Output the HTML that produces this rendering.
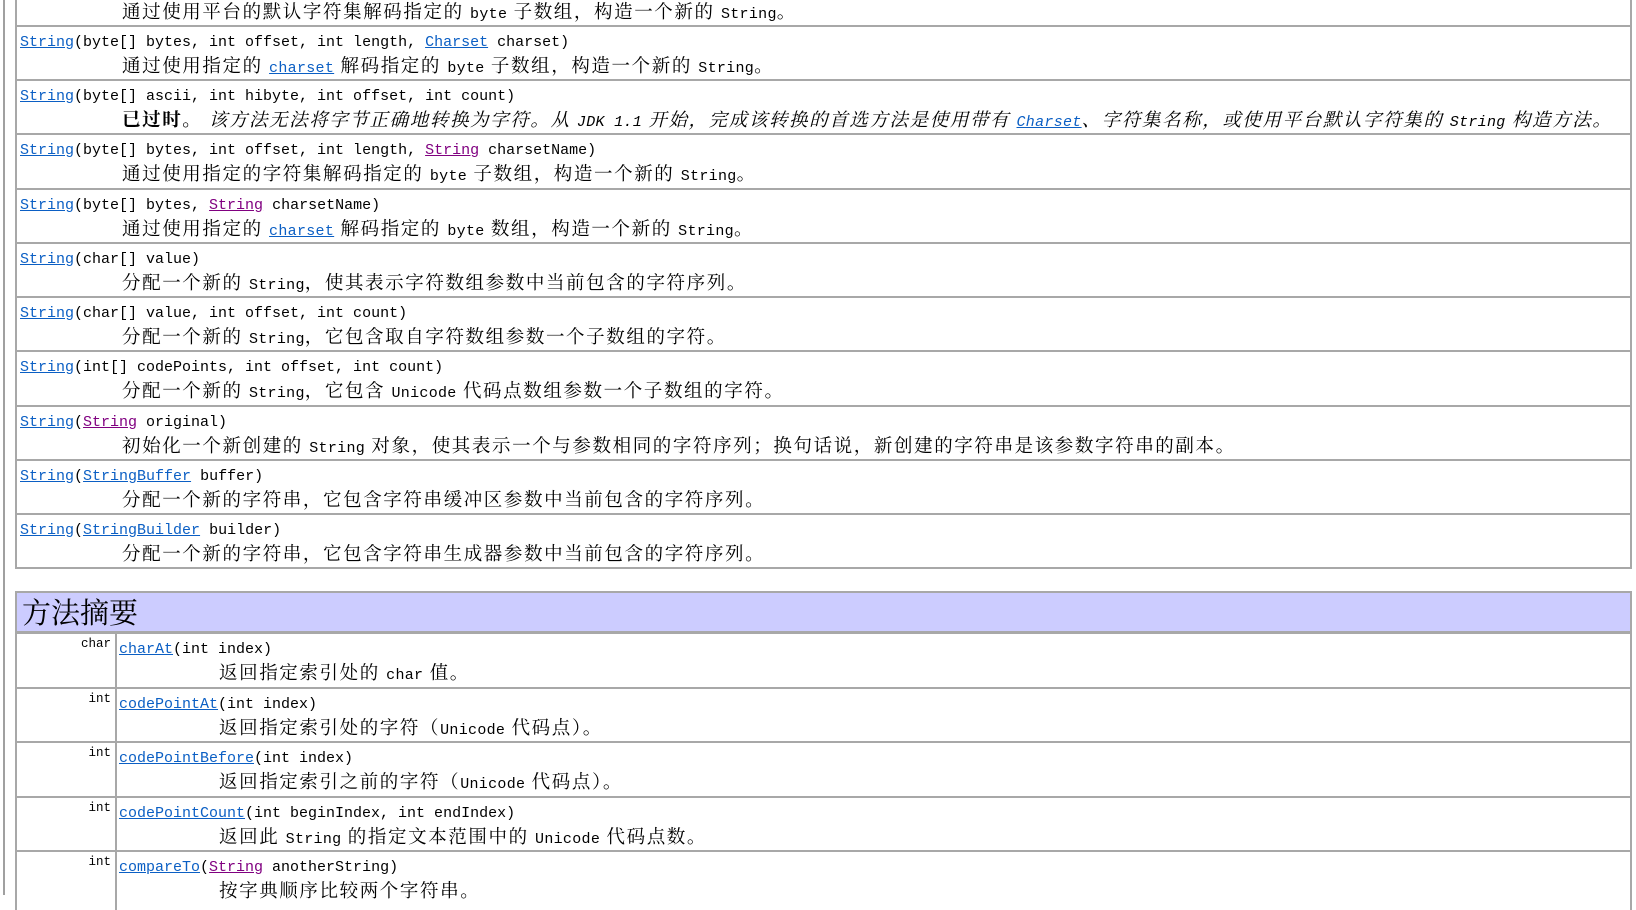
<!DOCTYPE html>
<html><head><meta charset="utf-8">
<style>
body{margin:0;width:1636px;height:895px;overflow:hidden;background:#fff;position:relative;font-family:"Liberation Mono","Noto Sans CJK SC",monospace;font-size:15px;color:#000}
.frame{position:absolute;left:3px;top:0;width:2px;height:895px;background:#a0a0a0}
.row{position:absolute;left:15px;width:1617px;border-top:2px solid #a8a8a8;border-left:2px solid #a8a8a8;border-right:2px solid #a8a8a8;box-sizing:border-box}
.sig{position:absolute;left:3px;top:6px;white-space:nowrap;line-height:20px}
.desc{position:absolute;left:105px;top:27px;white-space:nowrap;font-family:"Noto Serif CJK SC","Noto Sans CJK SC",serif;font-size:18.5px;letter-spacing:1.6px;line-height:22px}
.desc code,.desc .m{font-family:"Liberation Mono",monospace;font-size:15px;letter-spacing:0.3px}
a{color:#0b5fc4;text-decoration:underline}
a.b{color:#0b5fc4}
a.v{color:#800080}
.hdr{position:absolute;left:15px;top:591px;width:1617px;height:42px;background:#ccccff;border:2px solid #a8a8a8;box-sizing:border-box;font-family:"Noto Serif CJK SC",serif;font-size:29px;line-height:38px;padding-left:5px}
.mrow{position:absolute;left:15px;width:1617px;border-top:2px solid #a8a8a8;border-left:2px solid #a8a8a8;border-right:2px solid #a8a8a8;box-sizing:border-box;height:56px}
.ty{position:absolute;left:0;width:94px;top:3px;text-align:right;font-size:12.5px}
.col{position:absolute;left:98px;top:0;bottom:0;border-left:2px solid #a8a8a8}
.mrow .sig{left:102px}
.mrow .desc{left:202px}
</style></head><body>
<div class="frame"></div>
<div class="row" style="top:-30px;height:56px"><div class="desc" style="top:28px">通过使用平台的默认字符集解码指定的 <code>byte</code> 子数组，构造一个新的 <code>String</code>。</div></div>
<div class="row" style="top:25px;height:55px"><div class="sig"><a class="b">String</a>(byte[] bytes, int offset, int length, <a>Charset</a> charset)</div><div class="desc">通过使用指定的 <a class="m">charset</a> 解码指定的 <code>byte</code> 子数组，构造一个新的 <code>String</code>。</div></div>
<div class="row" style="top:79px;height:55px"><div class="sig"><a class="b">String</a>(byte[] ascii, int hibyte, int offset, int count)</div><div class="desc"><b>已过时。</b> <i>该方法无法将字节正确地转换为字符。从 <code>JDK 1.1</code> 开始，完成该转换的首选方法是使用带有 <a class="m">Charset</a>、字符集名称，或使用平台默认字符集的 <code>String</code> 构造方法。</i></div></div>
<div class="row" style="top:133px;height:56px"><div class="sig"><a class="b">String</a>(byte[] bytes, int offset, int length, <a class="v">String</a> charsetName)</div><div class="desc">通过使用指定的字符集解码指定的 <code>byte</code> 子数组，构造一个新的 <code>String</code>。</div></div>
<div class="row" style="top:188px;height:55px"><div class="sig"><a class="b">String</a>(byte[] bytes, <a class="v">String</a> charsetName)</div><div class="desc">通过使用指定的 <a class="m">charset</a> 解码指定的 <code>byte</code> 数组，构造一个新的 <code>String</code>。</div></div>
<div class="row" style="top:242px;height:55px"><div class="sig"><a class="b">String</a>(char[] value)</div><div class="desc">分配一个新的 <code>String</code>，使其表示字符数组参数中当前包含的字符序列。</div></div>
<div class="row" style="top:296px;height:55px"><div class="sig"><a class="b">String</a>(char[] value, int offset, int count)</div><div class="desc">分配一个新的 <code>String</code>，它包含取自字符数组参数一个子数组的字符。</div></div>
<div class="row" style="top:350px;height:56px"><div class="sig"><a class="b">String</a>(int[] codePoints, int offset, int count)</div><div class="desc">分配一个新的 <code>String</code>，它包含 <code>Unicode</code> 代码点数组参数一个子数组的字符。</div></div>
<div class="row" style="top:405px;height:55px"><div class="sig"><a class="b">String</a>(<a class="v">String</a> original)</div><div class="desc">初始化一个新创建的 <code>String</code> 对象，使其表示一个与参数相同的字符序列；换句话说，新创建的字符串是该参数字符串的副本。</div></div>
<div class="row" style="top:459px;height:55px"><div class="sig"><a class="b">String</a>(<a>StringBuffer</a> buffer)</div><div class="desc">分配一个新的字符串，它包含字符串缓冲区参数中当前包含的字符序列。</div></div>
<div class="row" style="top:513px;height:56px;border-bottom:2px solid #a8a8a8"><div class="sig"><a class="b">String</a>(<a>StringBuilder</a> builder)</div><div class="desc">分配一个新的字符串，它包含字符串生成器参数中当前包含的字符序列。</div></div>
<div class="hdr">方法摘要</div>
<div class="mrow" style="top:632px"><div class="ty">char</div><div class="col"></div><div class="sig"><a class="b">charAt</a>(int index)</div><div class="desc">返回指定索引处的 <code>char</code> 值。</div></div>
<div class="mrow" style="top:687px"><div class="ty">int</div><div class="col"></div><div class="sig"><a class="b">codePointAt</a>(int index)</div><div class="desc">返回指定索引处的字符（<code>Unicode</code> 代码点）。</div></div>
<div class="mrow" style="top:741px"><div class="ty">int</div><div class="col"></div><div class="sig"><a class="b">codePointBefore</a>(int index)</div><div class="desc">返回指定索引之前的字符（<code>Unicode</code> 代码点）。</div></div>
<div class="mrow" style="top:796px"><div class="ty">int</div><div class="col"></div><div class="sig"><a class="b">codePointCount</a>(int beginIndex, int endIndex)</div><div class="desc">返回此 <code>String</code> 的指定文本范围中的 <code>Unicode</code> 代码点数。</div></div>
<div class="mrow" style="top:850px;height:60px"><div class="ty">int</div><div class="col"></div><div class="sig"><a class="b">compareTo</a>(<a class="v">String</a> anotherString)</div><div class="desc">按字典顺序比较两个字符串。</div></div>
</body></html>
